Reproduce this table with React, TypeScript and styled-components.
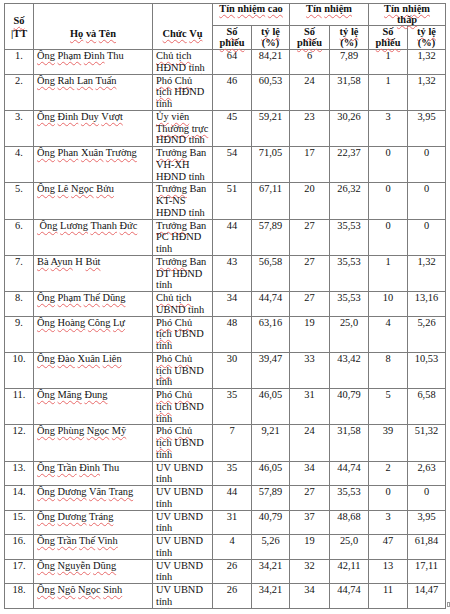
import styled, { createGlobalStyle } from 'styled-components';

const GlobalStyle = createGlobalStyle`
  html, body {
    margin: 0;
    padding: 0;
    background: #ffffff;
  }
  body {
    font-family: "Liberation Serif", "Times New Roman", serif;
    color: #111111;
  }
`;

const Page = styled.div`
  display: flex;
  align-items: flex-end;
  padding: 3px 0 0 4px;
`;

const Table = styled.table`
  border-collapse: collapse;
  table-layout: fixed;
  width: 441px;
  font-size: 10.4px;

  td, th {
    border: 1px solid #7c7c7c;
  }
`;

const GroupHead = styled.th`
  font-weight: bold;
  text-align: center;
  vertical-align: top;
  line-height: 10.5px;
  padding: 0 2px;
`;

const SpanHead = styled.th`
  font-weight: bold;
  text-align: center;
  vertical-align: bottom;
  line-height: 13px;
  padding: 0 2px 9px;
`;

const SubHead = styled.th`
  font-weight: bold;
  text-align: center;
  vertical-align: top;
  line-height: 10.5px;
  padding: 1px 1px 1px;
`;

const Cell = styled.td<{ $align?: 'left' | 'center' }>`
  text-align: ${(p) => p.$align ?? 'center'};
  vertical-align: top;
  line-height: 11.75px;
  padding: 0 3px;
  white-space: nowrap;
  overflow: hidden;
`;

const Marked = styled.span`
  text-decoration: underline wavy #e86a6a;
  text-decoration-thickness: 1px;
  text-underline-offset: 1.5px;
  text-decoration-skip-ink: none;
`;

const EndMark = styled.span`
  width: 3px;
  height: 3px;
  margin: 0 0 2px 1px;
  border: 1px solid #9a9a9a;
`;

// words the spell checker accepted
const known = new Set(['Thu', 'HĐND', 'UBND', 'Ban', 'VH-XH', 'KT-NS', 'PC', 'DT', 'UV', 'H', '(%)', '|TT']);

const spell = (text: string) =>
  text.split(' ').map((w, i, all) => (
    <span key={i}>
      {known.has(w) || w === '' ? w : <Marked>{w}</Marked>}
      {i < all.length - 1 ? ' ' : ''}
    </span>
  ));

const lines = (items: string[]) =>
  items.map((l, i) => (
    <span key={i}>
      {i > 0 && <br />}
      {spell(l)}
    </span>
  ));

type Row = { name: string; role: string[]; v: string[] };

const PHO_UB = ['Phó Chủ', 'tịch UBND', 'tỉnh'];
const UV = ['UV UBND', 'tỉnh'];

const rows: Row[] = [
  { name: 'Ông Phạm Đình Thu', role: ['Chủ tịch', 'HĐND tỉnh'], v: ['64', '84,21', '6', '7,89', '1', '1,32'] },
  { name: 'Ông Rah Lan Tuấn', role: ['Phó Chủ', 'tịch HĐND', 'tỉnh'], v: ['46', '60,53', '24', '31,58', '1', '1,32'] },
  { name: 'Ông Đinh Duy Vượt', role: ['Ủy viên', 'Thường trực', 'HĐND tỉnh'], v: ['45', '59,21', '23', '30,26', '3', '3,95'] },
  { name: 'Ông Phan Xuân Trường', role: ['Trưởng Ban', 'VH-XH', 'HĐND tỉnh'], v: ['54', '71,05', '17', '22,37', '0', '0'] },
  { name: 'Ông Lê Ngọc Bửu', role: ['Trưởng Ban', 'KT-NS', 'HĐND tỉnh'], v: ['51', '67,11', '20', '26,32', '0', '0'] },
  { name: '\u00a0Ông Lương Thanh Đức', role: ['Trưởng Ban', 'PC HĐND', 'tỉnh'], v: ['44', '57,89', '27', '35,53', '0', '0'] },
  { name: 'Bà Ayun H Bút', role: ['Trưởng Ban', 'DT HĐND', 'tỉnh'], v: ['43', '56,58', '27', '35,53', '1', '1,32'] },
  { name: 'Ông Phạm Thế Dũng', role: ['Chủ tịch', 'UBND tỉnh'], v: ['34', '44,74', '27', '35,53', '10', '13,16'] },
  { name: 'Ông Hoàng Công Lự', role: PHO_UB, v: ['48', '63,16', '19', '25,0', '4', '5,26'] },
  { name: 'Ông Đào Xuân Liên', role: PHO_UB, v: ['30', '39,47', '33', '43,42', '8', '10,53'] },
  { name: 'Ông Măng Đung', role: PHO_UB, v: ['35', '46,05', '31', '40,79', '5', '6,58'] },
  { name: 'Ông Phùng Ngọc Mỹ', role: PHO_UB, v: ['7', '9,21', '24', '31,58', '39', '51,32'] },
  { name: 'Ông Trần Đình Thu', role: UV, v: ['35', '46,05', '34', '44,74', '2', '2,63'] },
  { name: 'Ông Dương Văn Trang', role: UV, v: ['44', '57,89', '27', '35,53', '0', '0'] },
  { name: 'Ông Dương Tráng', role: UV, v: ['31', '40,79', '37', '48,68', '3', '3,95'] },
  { name: 'Ông Trần Thế Vinh', role: UV, v: ['4', '5,26', '19', '25,0', '47', '61,84'] },
  { name: 'Ông Nguyễn Dũng', role: UV, v: ['26', '34,21', '32', '42,11', '13', '17,11'] },
  { name: 'Ông Ngô Ngọc Sinh', role: UV, v: ['26', '34,21', '34', '44,74', '11', '14,47'] },
];

const widths = [29, 119, 60, 39, 38, 40, 39, 39, 38];
const groups = [['Tín nhiệm cao'], ['Tín nhiệm'], ['Tín nhiệm', 'thấp']];

export default function App() {
  return (
    <>
      <GlobalStyle />
      <Page>
        <Table>
          <colgroup>
            {widths.map((w, i) => (
              <col key={i} style={{ width: w }} />
            ))}
          </colgroup>
          <thead>
            <tr style={{ height: 22 }}>
              <SpanHead rowSpan={2}>{lines(['Số', '|TT'])}</SpanHead>
              <SpanHead rowSpan={2}>{spell('Họ và Tên')}</SpanHead>
              <SpanHead rowSpan={2}>{spell('Chức Vụ')}</SpanHead>
              {groups.map((g, i) => (
                <GroupHead key={i} colSpan={2}>
                  {lines(g)}
                </GroupHead>
              ))}
            </tr>
            <tr>
              {[0, 1, 2].flatMap((i) => [
                <SubHead key={`a${i}`}>{lines(['Số', 'phiếu'])}</SubHead>,
                <SubHead key={`b${i}`}>{lines(['tỷ lệ', '(%)'])}</SubHead>,
              ])}
            </tr>
          </thead>
          <tbody>
            {rows.map((r, i) => (
              <tr key={i}>
                <Cell>{i + 1}.</Cell>
                <Cell $align="left">{spell(r.name)}</Cell>
                <Cell $align="left">{lines(r.role)}</Cell>
                {r.v.map((v, j) => (
                  <Cell key={j}>{v}</Cell>
                ))}
              </tr>
            ))}
          </tbody>
        </Table>
        <EndMark />
      </Page>
    </>
  );
}
